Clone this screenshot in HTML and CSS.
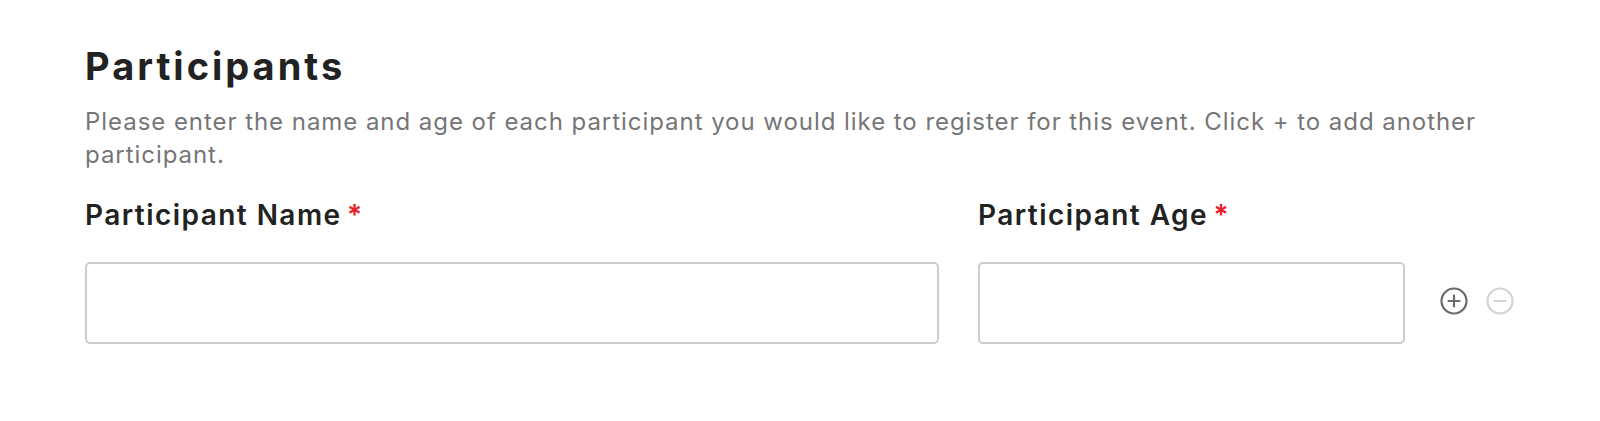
FILE: index.html
```html
<!DOCTYPE html>
<html lang="en">
<head>
<meta charset="utf-8">
<title>Participants</title>
<link rel="stylesheet" href="styles.css">
</head>
<body>
<section class="fieldset">
  <h2 class="title">Participants</h2>
  <p class="desc">Please enter the name and age of each participant you would like to register for this event. Click + to add another participant.</p>
  <div class="row">
    <div class="field field-name">
      <label class="label" for="pname">Participant Name <span class="req">*</span></label>
      <input class="input" id="pname" type="text">
    </div>
    <div class="field field-age">
      <label class="label" for="page">Participant Age <span class="req">*</span></label>
      <input class="input" id="page" type="text">
    </div>
    <div class="actions">
      <button class="icon-btn add" type="button" aria-label="Add participant">
        <svg viewBox="0 0 28 28" width="28" height="28"><circle cx="14" cy="14" r="12.5" fill="none" stroke="currentColor" stroke-width="2.2"/><path d="M14 8.5v11M8.5 14h11" stroke="currentColor" stroke-width="2.2" stroke-linecap="round"/></svg>
      </button>
      <button class="icon-btn remove" type="button" aria-label="Remove participant">
        <svg viewBox="0 0 28 28" width="28" height="28"><circle cx="14" cy="14" r="12.5" fill="none" stroke="currentColor" stroke-width="2.2"/><path d="M8.5 14h11" stroke="currentColor" stroke-width="2.2" stroke-linecap="round"/></svg>
      </button>
    </div>
  </div>
</section>
</body>
</html>
```
FILE: styles.css
```css
html, body {
  margin: 0;
  padding: 0;
  background: #ffffff;
}
body {
  font-family: Inter, "Liberation Sans", sans-serif;
  color: #222222;
}
.fieldset {
  padding: 44px 0 0 85px;
}
.title {
  margin: 0;
  font-size: 38px;
  line-height: 44px;
  font-weight: 700;
  letter-spacing: 3px;
  color: #222222;
}
.desc {
  margin: 17px 0 0;
  font-size: 24px;
  line-height: 33px;
  letter-spacing: 0.95px;
  color: #767676;
  max-width: 1420px;
}
.row {
  display: flex;
  align-items: flex-end;
  margin-top: 27px;
}
.field {
  display: flex;
  flex-direction: column;
  flex-shrink: 0;
}
.field-name {
  width: 854px;
}
.field-age {
  width: 427px;
  margin-left: 39px;
}
.label {
  font-size: 28px;
  line-height: 34px;
  font-weight: 600;
  letter-spacing: 1.45px;
  color: #222222;
  margin-bottom: 30px;
}
.req {
  color: #e8202a;
  margin-left: -3px;
}
.input {
  box-sizing: border-box;
  height: 82px;
  width: 100%;
  border: 2px solid #cccccc;
  border-radius: 5px;
  background: #ffffff;
  margin: 0;
}
.actions {
  display: flex;
  align-items: center;
  gap: 18px;
  height: 82px;
  padding-bottom: 4px;
  box-sizing: border-box;
  margin-left: 35px;
  flex-shrink: 0;
}
.icon-btn {
  border: 0;
  padding: 0;
  background: none;
  width: 28px;
  height: 28px;
  display: flex;
}
.add { color: #6a6a6a; }
.remove { color: #d4d4d4; }
```
